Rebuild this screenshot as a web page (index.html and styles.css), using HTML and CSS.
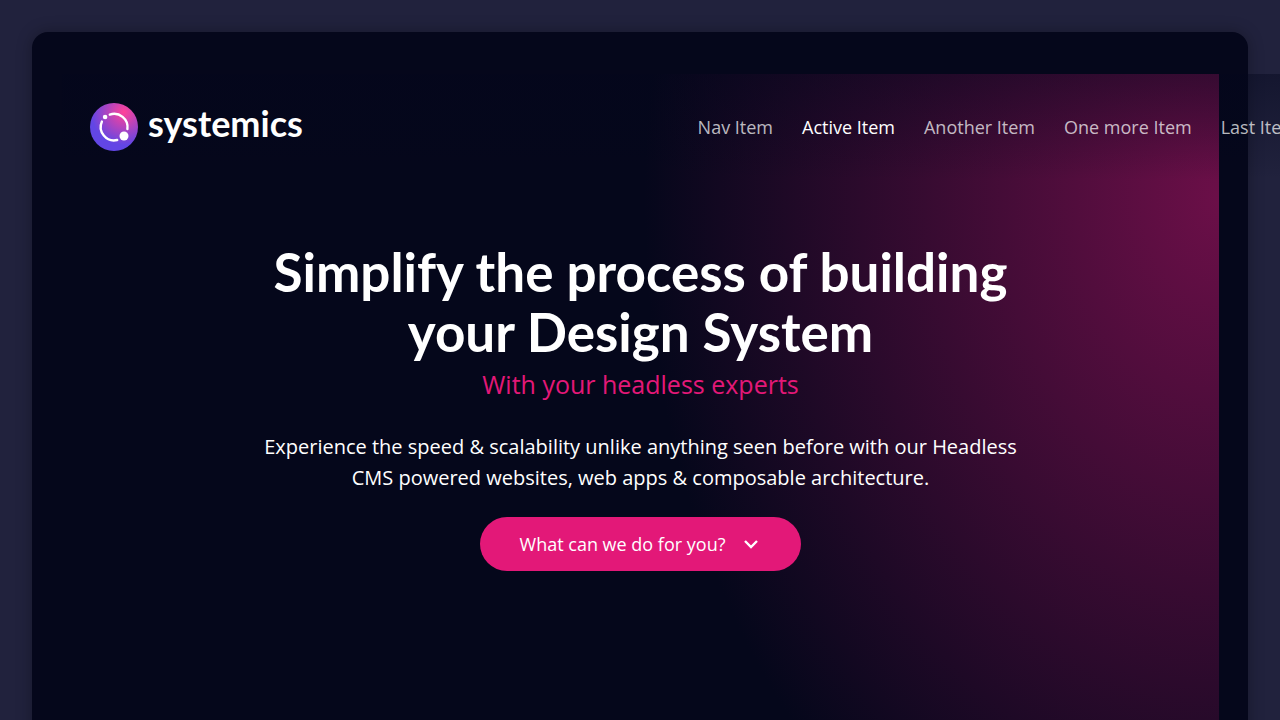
FILE: index.html
```html
<!DOCTYPE html>
<html lang="en">
<head>
<meta charset="utf-8">
<meta name="viewport" content="width=device-width, initial-scale=1">
<title>systemics</title>
<link rel="stylesheet" href="styles.css">
</head>
<body>
<div class="page">
  <div class="card">
    <div class="stage">
      <header class="header">
        <a class="brand" href="#">
          <svg class="brand-mark" viewBox="0 0 48 48" aria-hidden="true">
            <defs>
              <radialGradient id="mark" cx="34" cy="9" r="33" gradientUnits="userSpaceOnUse">
                <stop offset="0" stop-color="#ff4299"/>
                <stop offset="1" stop-color="#6246e5"/>
              </radialGradient>
            </defs>
            <circle cx="24" cy="24" r="24" fill="url(#mark)"/>
            <g fill="none" stroke="#fff" stroke-width="2.4" stroke-linecap="round">
              <path d="M19.8 11.6A13.4 13.4 0 0 1 37.4 26"/>
              <path d="M11.9 18.5A13.4 13.4 0 0 0 27.2 37"/>
            </g>
            <circle cx="15.1" cy="14" r="2.3" fill="#fff"/>
            <circle cx="34" cy="33" r="4.5" fill="#fff"/>
          </svg>
          <span class="brand-name">systemics</span>
        </a>
        <nav class="nav">
          <a class="nav-link" href="#">Nav Item</a>
          <a class="nav-link nav-link-active" href="#">Active Item</a>
          <a class="nav-link" href="#">Another Item</a>
          <a class="nav-link" href="#">One more Item</a>
          <a class="nav-link" href="#">Last Item</a>
        </nav>
      </header>
      <main class="hero">
        <h1 class="title">Simplify the process of building<br>your Design System</h1>
        <p class="subtitle">With your headless experts</p>
        <p class="lead">Experience the speed &amp; scalability unlike anything seen before with our Headless<br>CMS powered websites, web apps &amp; composable architecture.</p>
        <button class="cta" type="button">
          <span>What can we do for you?</span>
          <svg class="chevron" viewBox="0 0 16 16" aria-hidden="true"><path d="M2 5l6 6 6-6" fill="none" stroke="#fff" stroke-width="2.4"/></svg>
        </button>
      </main>
    </div>
  </div>
</div>
</body>
</html>
```
FILE: styles.css
```css
* { box-sizing: border-box; }
body {
  margin: 0;
  background: #21223d;
  color: #fff;
  font-family: "Open Sans", "Noto Sans", sans-serif;
}
.page {
  height: 100vh;
  padding: 32px 32px 0;
  overflow: hidden;
}
.card {
  min-height: 100vh;
  padding: 42px 29px 0 30px;
  border-radius: 16px;
  background: #05071b;
  box-shadow: 0 0 16px rgba(0, 0, 0, 0.3);
}
.stage {
  min-height: 100vh;
  background: radial-gradient(575px 780px at 100% 125px, #6b0f48, #05071b);
}
.header {
  display: flex;
  align-items: center;
  justify-content: space-between;
  width: 100vw;
  height: 106px;
  padding: 0 44px 0 28px;
  background: linear-gradient(rgba(3, 6, 28, 0.42), rgba(3, 6, 28, 0));
}
.brand {
  display: flex;
  align-items: center;
  gap: 10px;
  color: #fff;
  text-decoration: none;
}
.brand-mark { width: 48px; height: 48px; }
.brand-name {
  padding-bottom: 8px;
  font: 700 36px/40px Lato, sans-serif;
}
.nav {
  display: flex;
  gap: 29px;
}
.nav-link {
  font-size: 18px;
  line-height: 24px;
  color: rgba(255, 255, 255, 0.72);
  text-decoration: none;
  white-space: nowrap;
}
.nav-link-active { color: #fff; }
.hero {
  display: flex;
  flex-direction: column;
  align-items: center;
  padding-top: 62px;
  text-align: center;
}
.title {
  margin: 0;
  font: 700 53px/60px Lato, sans-serif;
}
.subtitle {
  margin: 3px 0 0;
  font-size: 25px;
  line-height: 38px;
  color: #e31878;
}
.lead {
  margin: 28px 0 0;
  font-size: 20px;
  line-height: 31px;
}
.cta {
  display: flex;
  align-items: center;
  gap: 18px;
  height: 54px;
  margin-top: 24px;
  padding: 0 42px 0 40px;
  border: 0;
  border-radius: 27px;
  background: #e31878;
  color: #fff;
  font: 18px/24px "Open Sans", sans-serif;
}
.chevron { width: 16px; height: 16px; }
```
